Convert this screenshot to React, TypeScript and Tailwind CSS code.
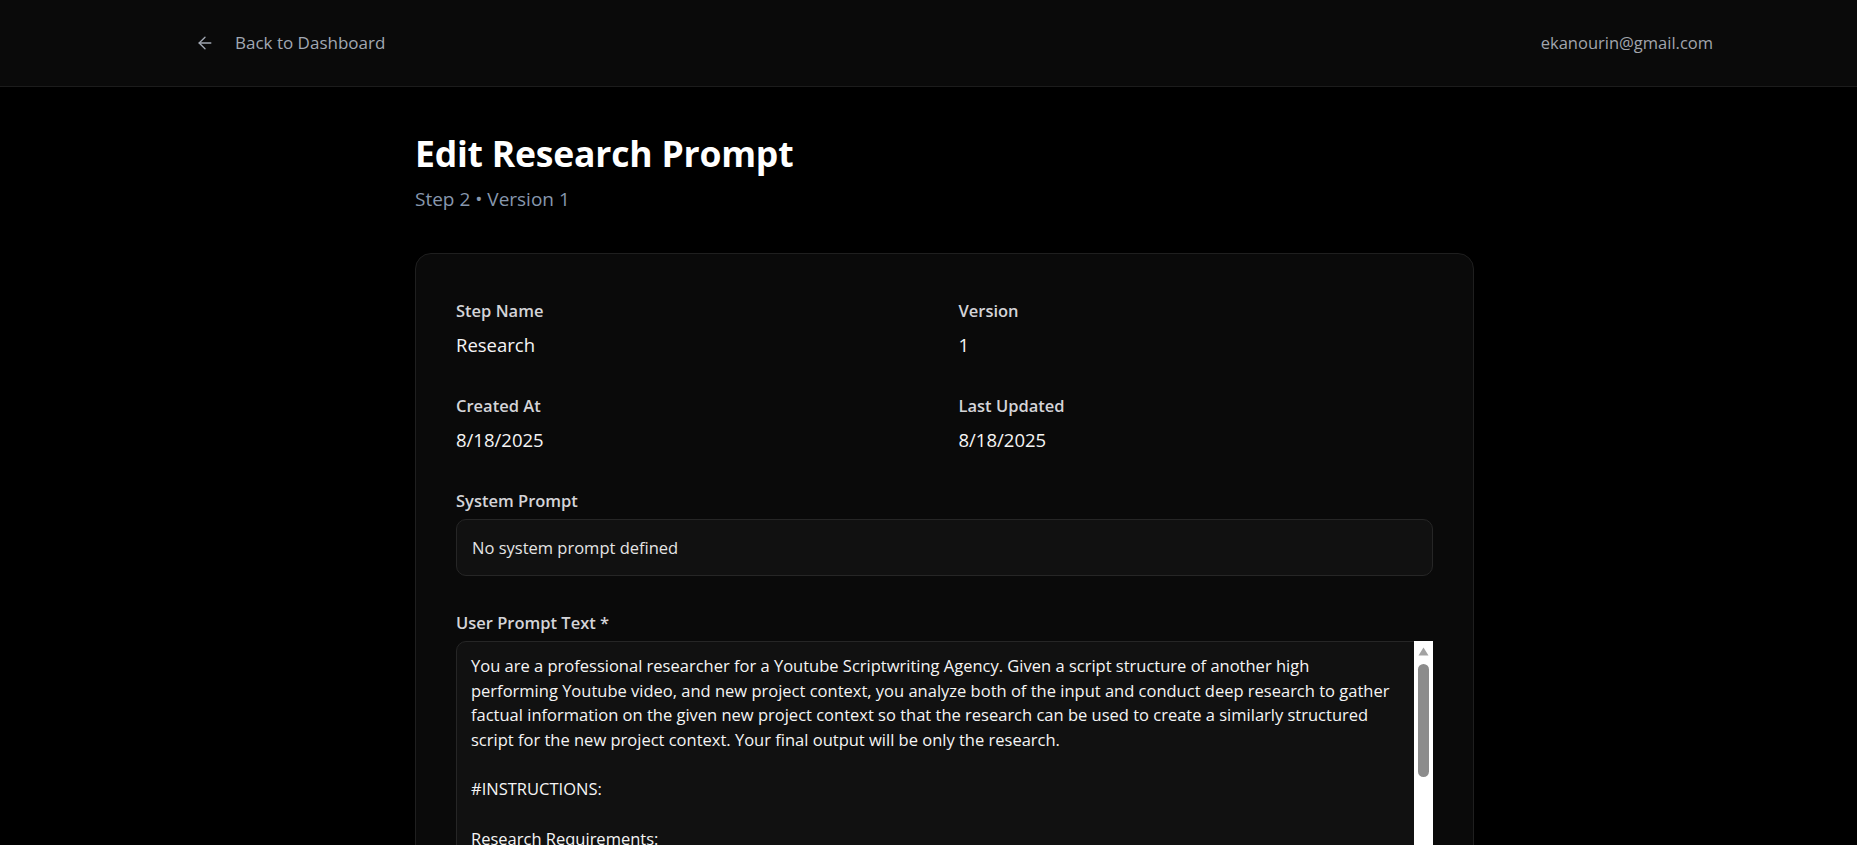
import { ArrowLeft } from 'lucide-react'

const promptLines = [
  'You are a professional researcher for a Youtube Scriptwriting Agency. Given a script structure of another high',
  'performing Youtube video, and new project context, you analyze both of the input and conduct deep research to gather',
  'factual information on the given new project context so that the research can be used to create a similarly structured',
  'script for the new project context. Your final output will be only the research.',
  '',
  '#INSTRUCTIONS:',
  '',
  'Research Requirements:',
  '',
  '',
]

function Field({ label, value }: { label: string; value: string }) {
  return (
    <div className="flex flex-col gap-[9px]">
      <span className="text-[16.5px] leading-6 font-semibold text-[#d4d4d8]">{label}</span>
      <span className="text-[18.5px] leading-[25px] text-[#f5f5f5]">{value}</span>
    </div>
  )
}

export default function App() {
  return (
    <div
      className="h-screen overflow-hidden bg-black text-white"
      style={{ fontFamily: '"Open Sans", "Noto Sans", sans-serif' }}
    >
      {/* top bar */}
      <header className="h-[87px] border-b border-[#1c1c1c] bg-[#0a0a0a]">
        <div className="flex h-full items-center justify-between pl-[195px] pr-[144px]">
          <button className="flex items-center gap-5 text-[17px] font-medium text-[#a1a8b3]">
            <ArrowLeft size={20} strokeWidth={1.6} />
            <span>Back to Dashboard</span>
          </button>
          <span className="text-[16.5px] text-[#a1a5ad]">ekanourin@gmail.com</span>
        </div>
      </header>

      <main className="pl-8">
        <div className="mx-auto w-[1059px] pt-[45px]">
          <h1 className="text-[35.5px] leading-[42px] font-bold tracking-[-0.2px] text-white">Edit Research Prompt</h1>
          <p className="mt-3 text-[19px] leading-[26px] text-[#8797ad]">Step 2 • Version 1</p>

          <div className="mt-[41px] rounded-2xl border border-[#1f1f1f] bg-[#0a0a0a] px-10 pt-[45px] pb-10">
            <div className="grid grid-cols-2 gap-x-7 gap-y-[37px]">
              <Field label="Step Name" value="Research" />
              <Field label="Version" value="1" />
              <Field label="Created At" value="8/18/2025" />
              <Field label="Last Updated" value="8/18/2025" />
            </div>

            <div className="mt-[37px] flex flex-col gap-[6px]">
              <span className="text-[16.5px] leading-6 font-semibold text-[#d4d4d8]">System Prompt</span>
              <div className="rounded-[10px] border border-[#262626] bg-[#111111] px-[15px] py-[15px] text-[16.5px] leading-[25px] text-[#e5e5e5]">
                No system prompt defined
              </div>
            </div>

            <div className="mt-[35px] flex flex-col gap-[6px]">
              <span className="text-[16.5px] leading-6 font-semibold text-[#d4d4d8]">User Prompt Text *</span>
              <div className="flex h-[420px] rounded-[10px] border border-[#262626] bg-[#111111]">
                <div className="flex-1 overflow-hidden px-[14px] pt-[12px] text-[16.5px] leading-[24.7px] whitespace-pre text-[#f5f5f5]">
                  {promptLines.map((line, i) => (
                    <div key={i} className="h-[24.7px]">{line}</div>
                  ))}
                </div>
                {/* scrollbar */}
                <div className="-my-px -mr-px flex w-[19px] flex-col items-center bg-white pt-[6px]">
                  <svg width="11" height="9" viewBox="0 0 11 9">
                    <path d="M5.5 0.5 L10.5 8.5 L0.5 8.5 Z" fill="#a3a3a3" />
                  </svg>
                  <div className="mt-[8px] h-[113px] w-[11px] rounded-full bg-[#8c8c8c]" />
                </div>
              </div>
            </div>
          </div>
        </div>
      </main>
    </div>
  )
}
